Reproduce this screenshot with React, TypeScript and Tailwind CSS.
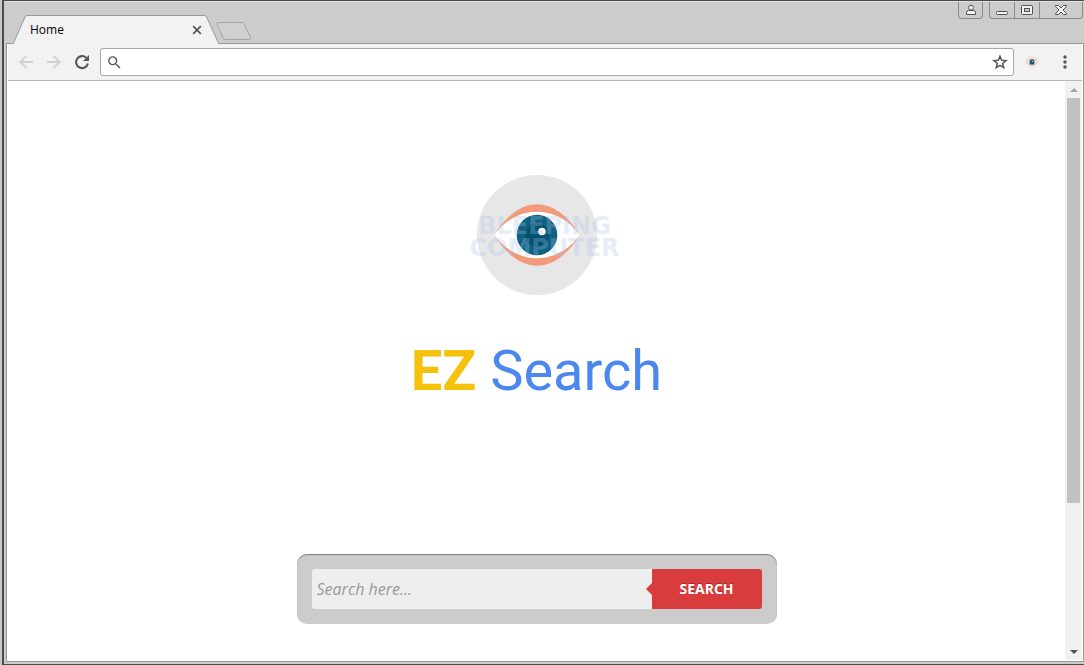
import React from 'react';
import { MdSearch, MdMoreVert } from 'react-icons/md';

const EyeLogo = ({ className }: { className?: string }) => (
    <svg viewBox="0 0 120 120" className={className} aria-hidden="true">
        <circle cx="60" cy="60" r="60" fill="#e7e7e7" />
        <path d="M17 60C43 19 77 19 103 60C77 101 43 101 17 60Z" fill="#f29b7b" />
        <path d="M17 60C40 29 80 29 103 60C80 91 40 91 17 60Z" fill="#fff" />
        <circle cx="60" cy="60" r="20.3" fill="#0e6181" />
        <circle cx="60" cy="60" r="12" fill="#02516f" />
        <circle cx="65" cy="56.5" r="3.8" fill="#f4f6f7" />
    </svg>
);

const ExtensionIcon = () => (
    <svg width="14" height="14" viewBox="0 0 14 14" aria-hidden="true">
        <circle cx="7" cy="7" r="6.5" fill="#e9e9e9" />
        <path d="M1.5 7C4.5 2 9.5 2 12.5 7C9.5 12 4.5 12 1.5 7Z" fill="#f4a98c" />
        <path d="M2 7C5 4 9 4 12 7C9 10 5 10 2 7Z" fill="#fff" />
        <circle cx="7" cy="7" r="2.6" fill="#0e5c7a" />
        <circle cx="7.5" cy="6.5" r=".6" fill="#fff" />
    </svg>
);

const ArrowIcon = ({ className }: { className?: string }) => (
    <svg width="14" height="14" viewBox="0 0 14 14" fill="none" stroke="currentColor" strokeWidth="1.9" className={className}>
        <path d="M14 7H1.5M7.5 .8L1.3 7L7.5 13.2" />
    </svg>
);

const ReloadIcon = () => (
    <svg width="16" height="16" viewBox="0 0 16 16" fill="none" stroke="currentColor" strokeWidth="2.1">
        <path d="M13.9 9.5A6 6 0 1 1 12.2 3.7" />
        <path d="M15 1V7H9Z" fill="currentColor" stroke="none" />
    </svg>
);

const StarIcon = () => (
    <svg width="16" height="16" viewBox="0 0 16 16" fill="none" stroke="currentColor" strokeWidth="1.5">
        <path d="M8 2.2L9.7 6.2L14 6.6L10.7 9.4L11.7 13.6L8 11.4L4.3 13.6L5.3 9.4L2 6.6L6.3 6.2Z" />
    </svg>
);

const WindowControls = () => (
    <div className="mr-px flex items-start self-start">
        <button
            aria-label="Profile"
            className="mr-[6px] flex h-[17px] w-[25px] items-center justify-center rounded-b border border-t-0 border-[#8a8a8a]"
        >
            <svg width="12" height="12" viewBox="0 0 12 12" fill="#f3f3f3" stroke="#505050">
                <path d="M1.5 10.5V8.5Q1.5 6.5 3.5 6.5H8.5Q10.5 6.5 10.5 8.5V10.5Z" />
                <circle cx="6" cy="3.7" r="2.4" />
            </svg>
        </button>
        <div className="flex h-[17px] divide-x divide-[#8a8a8a] rounded-b border border-t-0 border-[#8a8a8a]">
            <button aria-label="Minimize" className="flex w-[25px] items-center justify-center">
                <svg width="12" height="12" viewBox="0 0 12 12" fill="#f3f3f3" stroke="#505050">
                    <rect x="0.5" y="7.5" width="11" height="3" rx="1" />
                </svg>
            </button>
            <button aria-label="Maximize" className="flex w-[25px] items-center justify-center">
                <svg width="12" height="11" viewBox="0 0 12 11" fill="#f3f3f3" stroke="#505050">
                    <rect x="0.5" y="0.5" width="11" height="9" rx="1" />
                    <rect x="3.5" y="3.5" width="5" height="3" fill="#ccc" />
                </svg>
            </button>
            <button aria-label="Close" className="flex w-[42px] items-center justify-center">
                <svg width="12" height="12" viewBox="0 0 12 12" fill="#f3f3f3" stroke="#505050">
                    <path d="M0.5 1.5H3.5L6 4L8.5 1.5H11.5V2.5L8 6L11.5 9.5V10.5H8.5L6 8L3.5 10.5H0.5V9.5L4 6L0.5 2.5Z" />
                </svg>
            </button>
        </div>
    </div>
);

const TabStrip = () => (
    <header className="flex h-[42px] shrink-0 items-end justify-between border-t border-[#dedede]">
        <div className="flex items-end">
            <div className="relative z-10 -mb-px ml-[6px] flex h-[29px] w-[208px] items-center px-[18px]">
                <svg
                    className="absolute inset-0"
                    width="208"
                    height="29"
                    viewBox="0 0 208 29"
                    fill="#f2f2f2"
                    stroke="#999"
                    aria-hidden="true"
                >
                    <path d="M0 28.5Q1.5 28.5 2 27L13 2Q13.6 .5 15 .5H192.5Q194 .5 194.6 2L206 27Q206.6 28.5 208 28.5" />
                    <path d="M2 28.5H206" stroke="#f2f2f2" />
                </svg>
                <span className="relative flex-1 text-[12px] leading-4 text-black">Home</span>
                <button aria-label="Close tab" className="relative">
                    <svg width="10" height="10" viewBox="0 0 10 10" stroke="#555" strokeWidth="1.7">
                        <path d="M1.2 1.2L8.8 8.8M8.8 1.2L1.2 8.8" />
                    </svg>
                </button>
            </div>
            <button aria-label="New tab" className="mb-[3px] -ml-1">
                <svg width="36" height="18" viewBox="0 0 36 18" fill="#d0d0d0" stroke="#a2a2a2">
                    <path d="M2 .5H26Q27.5 .5 28.2 2L34.5 15.5Q35 17.5 33.5 17.5H9.5Q8 17.5 7.3 16L1 2.5Q.5 .5 2 .5Z" />
                </svg>
            </button>
        </div>
        <WindowControls />
    </header>
);

const Toolbar = () => (
    <div className="flex h-[37px] shrink-0 items-center border-b border-[#b6b6b6] bg-[#f2f2f2] pl-1">
        <button aria-label="Back" className="flex w-7 justify-center text-[#d0d0d0]">
            <ArrowIcon />
        </button>
        <button aria-label="Forward" className="flex w-7 justify-center text-[#d0d0d0]">
            <ArrowIcon className="rotate-180" />
        </button>
        <button aria-label="Reload" className="flex w-7 justify-center text-[#555]">
            <ReloadIcon />
        </button>
        <div className="ml-1 flex h-[28px] flex-1 items-center rounded-[3px] border border-[#a6a6a6] bg-white px-[5px]">
            <MdSearch size={17} className="text-[#555]" />
            <input aria-label="Address" className="h-5 min-w-0 flex-1 px-2 text-sm outline-none" />
            <button aria-label="Bookmark this page" className="text-[#555]">
                <StarIcon />
            </button>
        </div>
        <button aria-label="EZ Search extension" className="flex w-[36px] justify-center">
            <ExtensionIcon />
        </button>
        <button aria-label="Menu" className="mr-[7px] ml-[5px] flex w-[20px] justify-center text-[#555]">
            <MdMoreVert size={20} />
        </button>
    </div>
);

const Scrollbar = () => (
    <div className="flex w-[17px] shrink-0 flex-col items-center bg-[#f1f1f1]">
        <div className="flex h-[17px] items-center">
            <svg width="8" height="4" viewBox="0 0 8 4" fill="#a3a3a3">
                <path d="M0 4L4 0L8 4Z" />
            </svg>
        </div>
        <div className="flex w-[13px] flex-1 flex-col">
            <div className="basis-[74.4%] bg-[#c1c1c1]" />
        </div>
        <div className="flex h-[17px] items-center">
            <svg width="8" height="4" viewBox="0 0 8 4" fill="#505050">
                <path d="M0 0L4 4L8 0Z" />
            </svg>
        </div>
    </div>
);

const SearchForm = () => (
    <form
        onSubmit={(e) => e.preventDefault()}
        className="flex w-full max-w-[480px] rounded-[10px] bg-[#ccc] p-[15px] shadow-[inset_0_1px_1px_rgba(0,0,0,0.4)]"
    >
        <input
            type="text"
            aria-label="Search"
            placeholder="Search here..."
            className="h-10 min-w-0 flex-1 rounded-l-[3px] bg-[#eee] px-[5px] text-[16px] text-[#444] outline-none placeholder:italic placeholder:text-[#999]"
        />
        <button
            type="submit"
            className="relative h-10 w-[110px] rounded-r-[3px] bg-[#d83c3c] pb-[2px] text-[14px] font-bold text-white uppercase [text-shadow:0_-1px_0_rgba(0,0,0,0.3)]"
        >
            <span className="absolute top-[14px] -left-[6px] border-y-[6px] border-r-[6px] border-y-transparent border-r-[#d83c3c]" />
            Search
        </button>
    </form>
);

const HomePage = () => (
    <main className="flex min-w-0 flex-1 flex-col items-center bg-white px-4 pt-[94px]">
        <div className="relative">
            <EyeLogo className="size-[120px]" />
            <p className="absolute top-[40px] -left-[22px] w-[180px] text-center font-['DejaVu_Sans',sans-serif] text-[24px] leading-[22px] font-bold text-[#a9c2ec]/30 uppercase">
                Bleeping Computer
            </p>
        </div>
        <h1 className="mt-[39px] mb-[145px] font-['Roboto',sans-serif] text-[56px] leading-[75px] text-[#4a87ee]">
            <span className="font-bold text-[#f4c20d]">EZ</span> Search
        </h1>
        <SearchForm />
    </main>
);

const App: React.FC = () => {
    return (
        <div className="flex h-screen bg-[#c8c8c8] pl-[2px] font-['Open_Sans',sans-serif]">
            <div className="flex min-w-0 flex-1 flex-col border-y border-l-2 border-[#4a4a4a] bg-[#ccc] pb-[2px] pl-[2px]">
                <TabStrip />
                <div className="flex min-h-0 flex-1 flex-col border border-[#999] bg-white pr-px pl-px">
                    <Toolbar />
                    <div className="flex min-h-0 flex-1 pb-px">
                        <HomePage />
                        <Scrollbar />
                    </div>
                </div>
            </div>
        </div>
    );
};

export default App;
